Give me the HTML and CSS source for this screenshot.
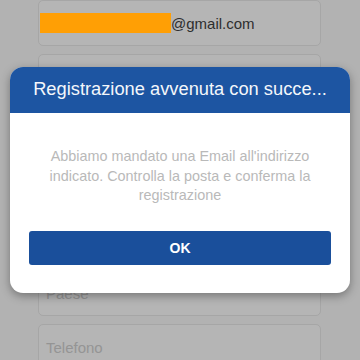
FILE: index.html
```html
<!DOCTYPE html>
<html lang="it">
<head>
<meta charset="utf-8">
<link rel="stylesheet" href="styles.css">
</head>
<body>
<div class="page">
  <div class="form">
    <div class="field"><span class="redact"></span><span class="val">@gmail.com</span></div>
    <div class="field"></div>
    <div class="field"></div>
    <div class="field"></div>
    <div class="field"></div>
    <div class="field"><span class="ph">Paese</span></div>
    <div class="field"><span class="ph">Telefono</span></div>
  </div>
  <div class="modal">
    <div class="modal-head">Registrazione avvenuta con succe...</div>
    <div class="modal-body">
      <p class="msg">Abbiamo mandato una Email all'indirizzo indicato. Controlla la posta e conferma la registrazione</p>
      <div class="btn">OK</div>
    </div>
  </div>
</div>
</body>
</html>
```
FILE: styles.css
```css
html, body {
  margin: 0;
  padding: 0;
}
body {
  width: 360px;
  height: 360px;
  overflow: hidden;
  background: #b2b2b2;
  font-family: "Liberation Sans", Arial, sans-serif;
}
.page {
  position: relative;
  width: 360px;
  height: 360px;
}
.form {
  display: flex;
  flex-direction: column;
  gap: 8px;
  padding: 0 39px 0 38px;
}
.field {
  height: 44px;
  border: 1px solid #a6a6a6;
  border-radius: 5px;
  background: #b5b5b5;
  display: flex;
  align-items: center;
  padding-left: 1px;
}
.redact {
  width: 131px;
  height: 20px;
  background: #ff9f05;
}
.val {
  font-size: 15px;
  color: #2e2e2e;
}
.ph {
  font-size: 15px;
  color: #949494;
  padding-left: 6px;
}
.modal {
  position: absolute;
  left: 10px;
  top: 67px;
  width: 340px;
  height: 226px;
  background: #fff;
  border-radius: 13px;
  overflow: hidden;
  box-shadow: 0 3px 10px rgba(0, 0, 0, 0.35);
}
.modal-head {
  height: 46px;
  background: #1d55a2;
  color: #f4f7fb;
  font-size: 18.3px;
  display: flex;
  align-items: center;
  justify-content: center;
  padding-bottom: 2px;
  box-sizing: border-box;
}
.modal-body {
  padding: 0 19px;
}
.msg {
  margin: 34px 0 0;
  text-align: center;
  font-size: 14.4px;
  line-height: 19.5px;
  color: #b9b9b9;
  padding: 0 12px;
}
.btn {
  margin-top: 25px;
  height: 34px;
  background: #1a4f9b;
  border-radius: 3px;
  color: #fff;
  font-weight: bold;
  font-size: 14px;
  display: flex;
  align-items: center;
  justify-content: center;
}
```
